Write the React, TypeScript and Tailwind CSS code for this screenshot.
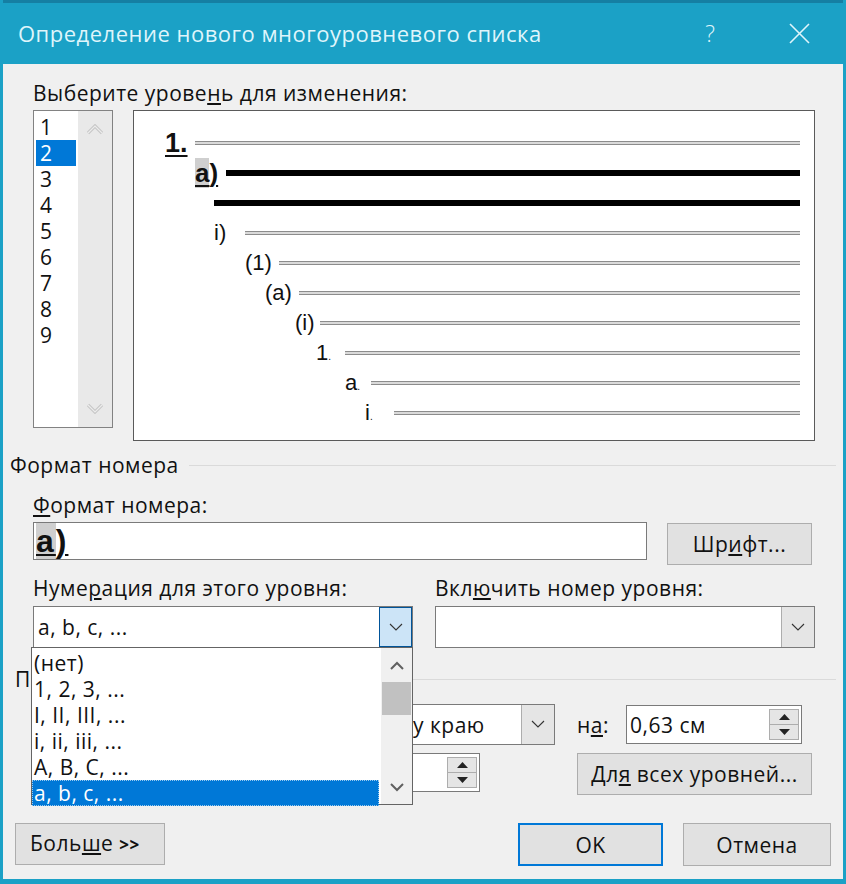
import React from 'react';

const ui = "font-['Open_Sans',sans-serif]";
const arial = "font-['Liberation_Sans',Arial,sans-serif]";

const Chevron: React.FC<{ dir: 'up' | 'down'; className?: string; w?: number }> = ({ dir, className, w = 1.4 }) => (
    <svg width="14" height="9" viewBox="0 0 14 9" className={className}>
        <polyline
            points={dir === 'up' ? '1,8 7,2 13,8' : '1,1 7,7 13,1'}
            fill="none"
            stroke="currentColor"
            strokeWidth={w}
        />
    </svg>
);

// light, double-stroked arrows of the disabled level scrollbar
const GhostChevron: React.FC<{ dir: 'up' | 'down' }> = ({ dir }) => (
    <svg width="16" height="11" viewBox="0 0 16 11">
        <polyline points={dir === 'up' ? '1,9 8,2 15,9' : '1,2 8,9 15,2'} fill="none" stroke="#c6c6c6" strokeWidth="3.2" />
        <polyline points={dir === 'up' ? '1,9 8,2 15,9' : '1,2 8,9 15,2'} fill="none" stroke="#ececec" strokeWidth="1.2" />
    </svg>
);

const Spinner: React.FC = () => (
    <div className="flex flex-col w-[30px] h-[31px] border border-[#adadad] bg-[#e5e5e5]">
        <div className="flex-1 flex items-center justify-center border-b border-[#adadad]">
            <svg width="11" height="6" viewBox="0 0 11 6"><polygon points="0,6 5.5,0 11,6" fill="#222" /></svg>
        </div>
        <div className="flex-1 flex items-center justify-center">
            <svg width="11" height="6" viewBox="0 0 11 6"><polygon points="0,0 5.5,6 11,0" fill="#222" /></svg>
        </div>
    </div>
);

const PREVIEW_ROWS: { pad: string; labelW: string; label?: React.ReactNode; thick?: boolean }[] = [
    { pad: 'pl-[31px]', labelW: 'w-[30px]', label: <span className="font-bold text-[27px] underline underline-offset-[3px] decoration-2">1.</span> },
    { pad: 'pl-[61px]', labelW: 'w-[31px]', label: <span className="font-bold text-[26px] underline underline-offset-[3px] decoration-2"><span className="bg-[#cfcfcf]">a</span>)</span>, thick: true },
    { pad: 'pl-[80px]', labelW: 'w-0', thick: true },
    { pad: 'pl-[80px]', labelW: 'w-[31px]', label: 'i)' },
    { pad: 'pl-[111px]', labelW: 'w-[34px]', label: '(1)' },
    { pad: 'pl-[131px]', labelW: 'w-[34px]', label: '(a)' },
    { pad: 'pl-[161px]', labelW: 'w-[25px]', label: '(i)' },
    { pad: 'pl-[182px]', labelW: 'w-[29px]', label: <>1<span className="text-[10px]">.</span></> },
    { pad: 'pl-[211px]', labelW: 'w-[26px]', label: <>a<span className="text-[10px]">.</span></> },
    { pad: 'pl-[231px]', labelW: 'w-[29px]', label: <>i<span className="text-[10px]">.</span></> },
];

const NUMBERING = ['(нет)', '1, 2, 3, ...', 'I, II, III, ...', 'i, ii, iii, ...', 'A, B, C, ...', 'a, b, c, ...'];

const App: React.FC = () => {
    return (
        <div className={`w-[846px] h-[884px] bg-[#1ba1c6] flex flex-col px-[3px] pb-[5px] ${ui}`}>
            {/* title bar */}
            <div className="h-[64px] flex items-center border-t-[3px] border-[#157fa3] text-[#dff5fb]">
                <div className="ml-[15px] text-[22px] tracking-[0.5px]">Определение нового многоуровневого списка</div>
                <div className="ml-auto mr-[74px] text-[23px] font-light">?</div>
                <svg width="21" height="21" viewBox="0 0 21 21" className="mr-[33px]">
                    <path d="M1 1 L20 20 M20 1 L1 20" stroke="#dff5fb" strokeWidth="1.6" />
                </svg>
            </div>

            {/* body */}
            <div className="flex-1 bg-[#f0f0f0] relative text-[21px] tracking-[0.5px] text-[#111] leading-[26px]">
                <div className="mt-[16px] ml-[30px]">Выберите урове<u>н</u>ь для изменения:</div>

                <div className="flex mt-[4px]">
                    {/* level list */}
                    <div className="ml-[30px] w-[80px] h-[318px] border border-[#828282] bg-white flex">
                        <div className="w-[44px] pt-[3px]">
                            {[1, 2, 3, 4, 5, 6, 7, 8, 9].map(n => (
                                <div
                                    key={n}
                                    className={`h-[26px] mx-[2px] pl-[4px] ${n === 2 ? 'bg-[#0078d7] text-white' : ''}`}
                                >
                                    {n}
                                </div>
                            ))}
                        </div>
                        <div className="flex-1 bg-[#e9e9e9] flex flex-col items-center justify-between py-[13px]">
                            <GhostChevron dir="up" />
                            <GhostChevron dir="down" />
                        </div>
                    </div>

                    {/* preview */}
                    <div className={`ml-[20px] w-[682px] h-[331px] border border-[#5a5a5a] bg-white pt-[17px] text-[22px] tracking-normal ${arial}`}>
                        {PREVIEW_ROWS.map((r, i) => (
                            <div key={i} className={`h-[30px] flex items-center ${r.pad}`}>
                                <span className={`${r.labelW} shrink-0 leading-none`}>{r.label}</span>
                                {r.thick ? (
                                    <div className="flex-1 mr-[14px] h-[6px] bg-black" />
                                ) : (
                                    <div className="flex-1 mr-[14px] h-[4px] border-y border-[#8c8c8c] bg-[#dadada]" />
                                )}
                            </div>
                        ))}
                    </div>
                </div>

                {/* Формат номера group */}
                <div className="flex items-center mt-[11px]">
                    <div className="ml-[7px]">Формат номера</div>
                    <div className="flex-1 h-px bg-[#dadada] ml-[10px] mr-[7px]" />
                </div>

                <div className="mt-[14px] ml-[30px]"><u>Ф</u>ормат номера:</div>
                <div className="flex items-start mt-[4px]">
                    <div className={`ml-[30px] w-[614px] h-[38px] border border-[#7a7a7a] bg-white flex items-center pl-[2px] text-[32px] tracking-[2px] leading-none ${arial}`}>
                        <span className="font-bold underline underline-offset-[2px] decoration-2"><span className="bg-[#cfcfcf]">a</span>)</span>
                    </div>
                    <button className="ml-[20px] mt-px w-[145px] h-[42px] border border-[#adadad] bg-[#e1e1e1]">
                        Шр<u>и</u>фт...
                    </button>
                </div>

                <div className="flex mt-[10px]">
                    <div className="ml-[30px] w-[402px]">Нуме<u>р</u>ация для этого уровня:</div>
                    <div>Вкл<u>ю</u>чить номер уровня:</div>
                </div>
                <div className="flex mt-[5px]">
                    <div className="ml-[30px] w-[380px] h-[42px] border border-[#7a7a7a] bg-white flex">
                        <div className="flex-1 flex items-center pl-[4px]">a, b, c, ...</div>
                        <div className="w-[33px] bg-[#cce4f7] border border-[#005499] flex items-center justify-center text-[#333]">
                            <Chevron dir="down" w={1.1} />
                        </div>
                    </div>
                    <div className="ml-[22px] w-[380px] h-[42px] border border-[#7a7a7a] bg-white flex">
                        <div className="flex-1" />
                        <div className="w-[33px] bg-[#e5e5e5] border-l border-[#adadad] flex items-center justify-center text-[#333]">
                            <Chevron dir="down" w={1.1} />
                        </div>
                    </div>
                </div>

                {/* Положение group, mostly covered by the open list */}
                <div className="flex items-center mt-[18px]">
                    <div className="ml-[12px] w-[16px] overflow-hidden">П</div>
                    <div className="flex-1 h-px bg-[#dadada] ml-[10px] mr-[7px]" />
                </div>
                <div className="flex items-center mt-[12px]">
                    <div className="ml-[240px] w-[312px] h-[41px] border border-[#7a7a7a] bg-white flex">
                        <div className="flex-1 flex items-center pl-[70px]">по левому краю</div>
                        <div className="w-[33px] bg-[#e5e5e5] border-l border-[#adadad] flex items-center justify-center text-[#333]">
                            <Chevron dir="down" w={1.1} />
                        </div>
                    </div>
                    <div className="ml-[22px] w-[49px]">н<u>а</u>:</div>
                    <div className="w-[176px] h-[39px] border border-[#7a7a7a] bg-white flex items-center pl-[2px] pr-[2px]">
                        <div className="flex-1 pl-[1px]">0,63 см</div>
                        <Spinner />
                    </div>
                </div>
                <div className="flex items-start mt-[8px]">
                    <div className="ml-[240px] w-[237px] h-[39px] border border-[#7a7a7a] bg-white flex items-center pr-[2px]">
                        <div className="flex-1" />
                        <Spinner />
                    </div>
                    <button className="ml-[97px] w-[235px] h-[42px] border border-[#adadad] bg-[#e1e1e1]">
                        Дл<u>я</u> всех уровней...
                    </button>
                </div>

                {/* bottom buttons */}
                <div className="flex mt-[28px]">
                    <button className="ml-[12px] w-[150px] h-[42px] border border-[#adadad] bg-[#e1e1e1] text-left pl-[14px]">
                        Боль<u>ш</u>е <span className="font-bold text-[17px]">&gt;&gt;</span>
                    </button>
                    <button className="ml-auto w-[145px] h-[43px] border-2 border-[#0078d7] bg-[#e1e1e1]">
                        OK
                    </button>
                    <button className="ml-[20px] mr-[12px] w-[148px] h-[43px] border border-[#adadad] bg-[#e1e1e1]">
                        Отмена
                    </button>
                </div>

                {/* open dropdown list */}
                <div className="absolute left-[28px] top-[583px] w-[382px] h-[158px] border border-[#646464] bg-white flex">
                    <div className="flex-1 pt-[2px]">
                        {NUMBERING.map((t, i) => (
                            <div
                                key={t}
                                className={`h-[26px] pl-[2px] ${i === 5 ? 'bg-[#0078d7] text-white outline-dotted outline-1 outline-[#99c9ef] -outline-offset-1 mr-[2px]' : ''}`}
                            >
                                {t}
                            </div>
                        ))}
                    </div>
                    <div className="w-[31px] bg-[#f0f0f0] flex flex-col items-center text-[#606060]">
                        <div className="h-[34px] flex items-center justify-center"><Chevron dir="up" w={2} /></div>
                        <div className="w-[29px] h-[33px] bg-[#c1c1c1]" />
                        <div className="flex-1" />
                        <div className="h-[34px] flex items-center justify-center"><Chevron dir="down" w={2} /></div>
                    </div>
                </div>
            </div>
        </div>
    );
};

export default App;
